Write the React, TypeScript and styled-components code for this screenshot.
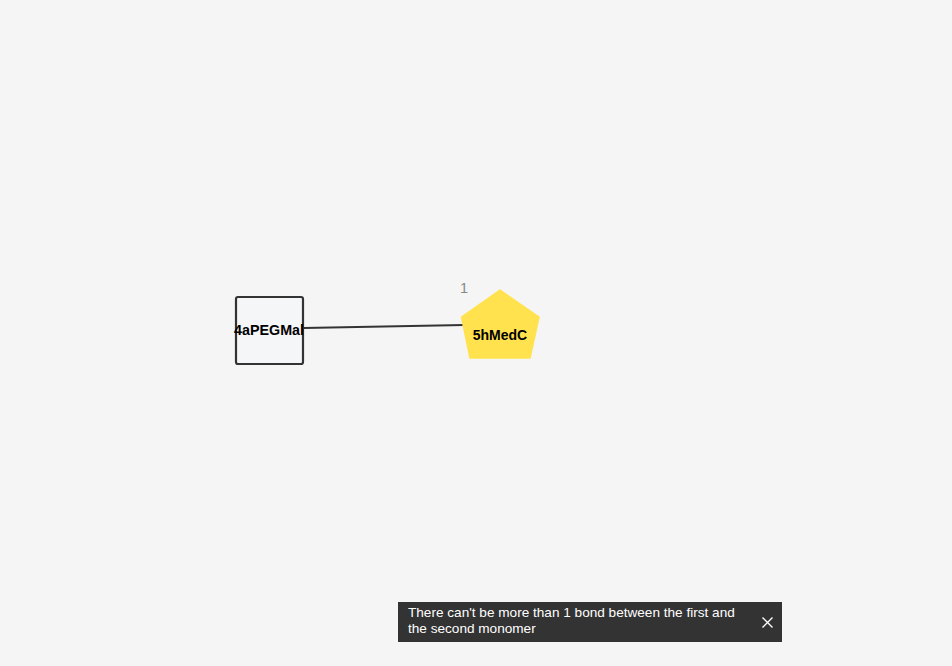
import React from "react";
import styled, { createGlobalStyle } from "styled-components";

const Global = createGlobalStyle`
  html, body { margin: 0; padding: 0; background: #f5f5f5; }
  body { font-family: "Liberation Sans", Arial, sans-serif; }
`;

const Page = styled.div`
  position: relative;
  width: 952px;
  height: 666px;
  overflow: hidden;
  background: #f5f5f5;
`;

const Canvas = styled.svg`
  display: block;
  width: 952px;
  height: 666px;
`;

const Toast = styled.div`
  position: absolute;
  left: 398px;
  top: 602px;
  width: 384px;
  height: 40px;
  box-sizing: border-box;
  background: #333333;
  color: #ffffff;
  display: flex;
  align-items: center;
  justify-content: space-between;
  padding: 0 9px 2px 10px;
`;

const ToastText = styled.div`
  font-family: "Liberation Sans", Arial, sans-serif;
  font-size: 13.6px;
  line-height: 16px;
  width: 340px;
`;

const CloseButton = styled.button`
  border: none;
  background: none;
  padding: 0;
  width: 12px;
  height: 12px;
  margin-top: 2px;
  display: flex;
  align-items: center;
  justify-content: center;
  cursor: pointer;
`;

const Label = styled.text<{ $size?: number }>`
  font-family: "Liberation Sans", Arial, sans-serif;
  font-weight: 700;
  font-size: ${(p) => p.$size ?? 14}px;
  fill: #000;
`;

const Number = styled.text`
  font-family: "Liberation Sans", Arial, sans-serif;
  font-size: 14.5px;
  fill: #888888;
`;

export default function App() {
  return (
    <>
      <Global />
      <Page>
        <Canvas viewBox="0 0 952 666">
          <line x1={304} y1={328} x2={464} y2={325} stroke="#333" strokeWidth={2} />
          <rect x={236} y={297} width={67} height={67} rx={2} fill="#f5f6f8" stroke="#333" strokeWidth={2.2} />
          <Label x={269} y={335} textAnchor="middle" $size={14.3}>4aPEGMal</Label>
          <polygon points="500,290 539,317 530,358 470,358 461.5,317" fill="#ffe24d" strokeLinejoin="round" stroke="#ffe24d" strokeWidth={1.5} />
          <Label x={500} y={340} textAnchor="middle" $size={14}>5hMedC</Label>
          <Number x={460} y={292.5}>1</Number>
        </Canvas>
        <Toast>
          <ToastText>There can't be more than 1 bond between the first and the second monomer</ToastText>
          <CloseButton aria-label="Close">
            <svg width="11" height="11" viewBox="0 0 11 11">
              <path d="M0.5 0.5 L10.5 10.5 M10.5 0.5 L0.5 10.5" stroke="#fff" strokeWidth={1.4} />
            </svg>
          </CloseButton>
        </Toast>
      </Page>
    </>
  );
}
